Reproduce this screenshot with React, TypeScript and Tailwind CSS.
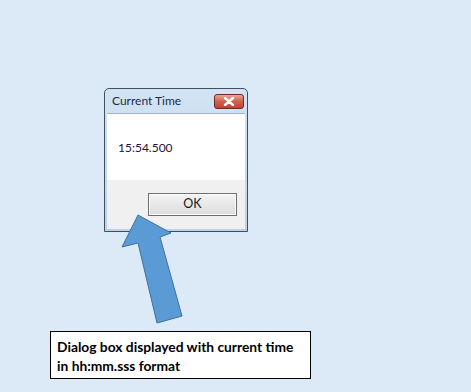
import React from "react";

export default function App() {
  return (
    <div className="relative w-[471px] h-[392px] bg-[#dce9f6] overflow-hidden" style={{ fontFamily: '"Lato", "Noto Sans", sans-serif' }}>
      <div className="flex flex-col pt-[88px]">
        {/* Dialog */}
        <div className="ml-[104px] w-[144px] h-[144px] border border-[#3f5062] rounded-t-[5px] bg-gradient-to-b from-[#d3e3f4] to-[#bcd2ea] flex flex-col px-[2px] pb-[2px]">
          <div className="h-[24px] flex items-center justify-between pl-[5px] pr-[1px]">
            <span className="block text-[12px] leading-none text-[#1c2c44]">Current Time</span>
            <div className="w-[30px] h-[15px] rounded-[3px] border border-[#6e2a22] bg-gradient-to-b from-[#e9a595] via-[#d0604e] to-[#c04434] flex items-center justify-center">
              <svg width="12" height="9" viewBox="0 0 12 9">
                <path d="M2 1 L10 8 M10 1 L2 8" stroke="#ffffff" strokeWidth="2.4" strokeLinecap="round" />
              </svg>
            </div>
          </div>
          <div className="flex-1 flex flex-col border-t border-[#9fb5cc]">
            <div className="h-[66px] bg-white pl-[11px] pt-[26px]">
              <span className="block text-[12px] leading-[16px] text-[#2a0f40]">15:54.500</span>
            </div>
            <div className="flex-1 bg-[#f0f0f0] flex justify-end items-start pt-[13px] pr-[8px]">
              <div className="w-[89px] h-[23px] border border-[#6f6f6f] bg-gradient-to-b from-[#f4f4f4] to-[#dcdcdc] shadow-[inset_0_0_0_1px_#fcfcfc] flex items-center justify-center">
                <span className="block text-[12.5px] leading-none text-[#1a1a1a]">OK</span>
              </div>
            </div>
          </div>
        </div>

        {/* Annotation */}
        <div className="ml-[50px] mt-[99px] w-[261px] h-[48px] border border-black bg-white pl-[6px] pt-[5px]">
          <p className="text-[13.8px] leading-[19px] font-bold text-black">
            Dialog box displayed with current time
            <br />
            in hh:mm.sss format
          </p>
        </div>
      </div>

      {/* Arrow */}
      <svg className="absolute left-0 top-0" width="471" height="392" viewBox="0 0 471 392">
        <polygon
          points="138,215 171,233 160,237 182,316 157,323 138,243 122,247"
          fill="#5b9bd5"
          stroke="#41719c"
          strokeWidth="1"
          strokeLinejoin="miter"
        />
      </svg>
    </div>
  );
}
